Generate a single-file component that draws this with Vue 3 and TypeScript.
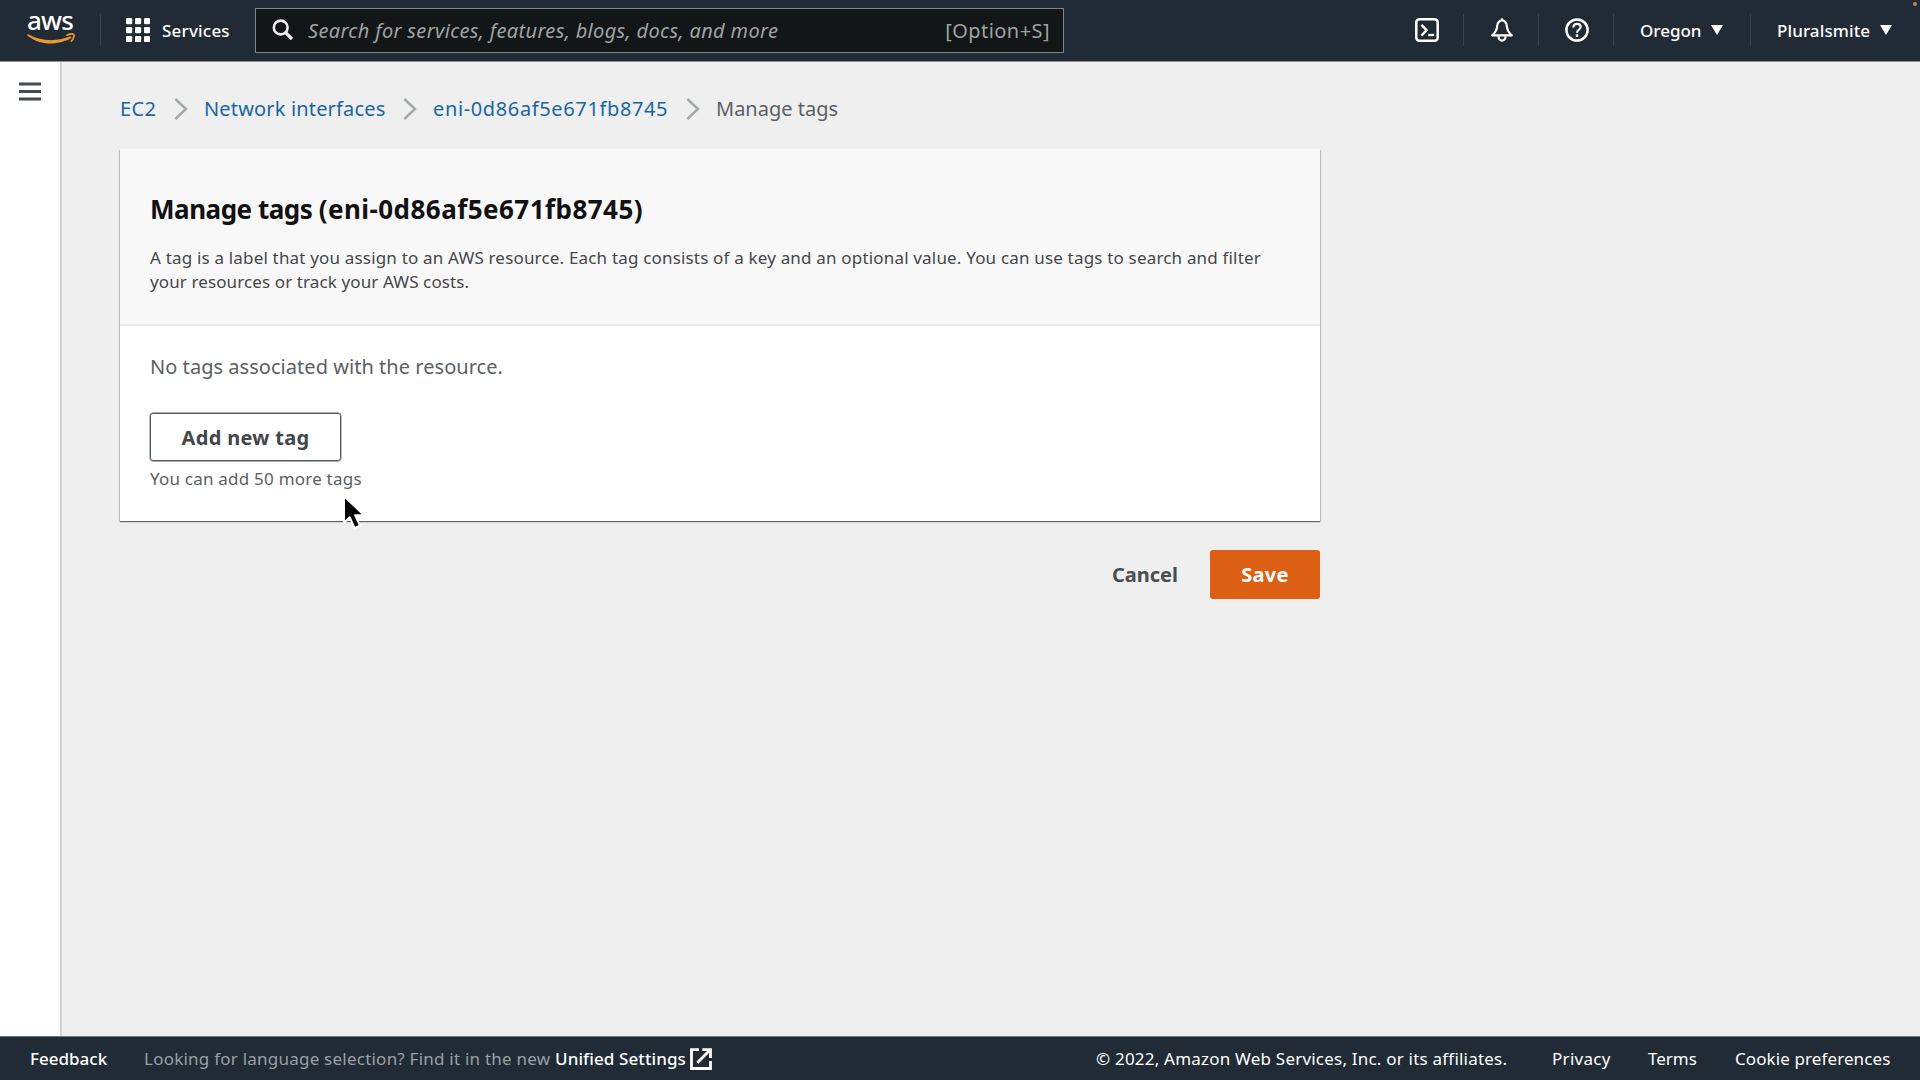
<script setup lang="ts">
interface Crumb {
  label: string
  width: number
  spacing: number
  current?: boolean
}

const resourceId = 'eni-0d86af5e671fb8745'

const crumbs: Crumb[] = [
  { label: 'EC2', width: 54, spacing: 0.4 },
  { label: 'Network interfaces', width: 199, spacing: 0.16 },
  { label: resourceId, width: 253, spacing: 0.63 },
  { label: 'Manage tags', width: 130, spacing: 0, current: true },
]
</script>

<template>
  <div class="page">
    <header class="topbar">
      <a class="logo">
        <span class="logo-text">aws</span>
        <svg class="smile" width="50" height="14" viewBox="0 0 50 14">
          <path d="M.6 1.4C-.1 2 .1 2.5.8 3.1 7.500 8.300 15.200 10.600 23.500 10.600 31.400 10.600 39.300 8.200 44 5.100c1.200-.9.200-2.200-1.200-1.500C28.500 9.100 13.800 8 1.700 1.500Z" fill="#f0962a" />
          <path d="M40 2.200c2.800-1.300 5.900-1.300 6.800-.6.800.8-.2 4.300-2.400 6.500" fill="none" stroke="#f0962a" stroke-width="1.700" stroke-linecap="round" />
        </svg>
      </a>
      <span class="rule"></span>
      <a class="services">
        <svg width="24" height="24" viewBox="0 0 24 24" fill="#fff">
          <template v-for="r in 3" :key="r">
            <rect v-for="c in 3" :key="c" :x="(c - 1) * 9" :y="(r - 1) * 9" width="6.200" height="6.200" rx="1.300" />
          </template>
        </svg>
        <span>Services</span>
      </a>
      <div class="search">
        <svg class="magnifier" width="22" height="22" viewBox="0 0 22 22" fill="none" stroke="#eef0f0">
          <circle cx="8.700" cy="8.500" r="6.900" stroke-width="2.600" />
          <path d="M13.600 13.600 20 20" stroke-width="3.200" />
        </svg>
        <span class="placeholder">Search for services, features, blogs, docs, and more</span>
        <span class="shortcut">[Option+S]</span>
      </div>
      <nav class="tools">
        <a class="tool">
          <svg width="24" height="24" viewBox="0 0 24 24" fill="none" stroke="#fff">
            <rect x="1.300" y="1.300" width="21.400" height="21.400" rx="3" stroke-width="2.500" />
            <path d="m6.400 6.800 5.300 5.400-5.300 5.400" stroke-width="2.400" />
            <path d="M13.200 17h6" stroke-width="2.300" />
          </svg>
        </a>
        <a class="tool">
          <svg width="24" height="24" viewBox="0 0 24 24" fill="none" stroke="#fff" stroke-width="2.200" stroke-linejoin="round">
            <path d="M12 2.300c-3.100.7-4.600 2.700-4.800 5.700-.2 4.400-1.400 6.300-5 9.300h19.600c-3.600-3-4.800-4.900-5-9.300-.2-3-1.700-5-4.800-5.700Z" />
            <path d="M12 .3v2.500" />
            <path d="M8.500 18.300v.8a3.500 3.500 0 0 0 7 0v-.8" />
          </svg>
        </a>
        <a class="tool">
          <svg width="24" height="24" viewBox="0 0 24 24" fill="none" stroke="#fff">
            <circle cx="12" cy="12" r="10.600" stroke-width="2.500" />
            <path d="M8.300 9.400c0-2.100 1.500-3.500 3.700-3.500s3.700 1.300 3.700 3.200c0 2.300-3.700 2.600-3.700 5.600" stroke-width="2.200" />
            <path d="M12 16.400v2.500" stroke-width="2.500" />
          </svg>
        </a>
        <a class="menu region">
          <span>Oregon</span>
          <svg width="12" height="10" viewBox="0 0 12 10"><path d="M0 0h12L6 10Z" fill="#fff" /></svg>
        </a>
        <a class="menu account">
          <span>Pluralsmite</span>
          <svg width="12" height="10" viewBox="0 0 12 10"><path d="M0 0h12L6 10Z" fill="#fff" /></svg>
        </a>
      </nav>
      <i class="indicator"></i>
    </header>

    <div class="body">
      <aside class="rail">
        <svg width="22" height="19" viewBox="0 0 22 19" fill="#454b50">
          <rect y="0.500" width="22" height="3" />
          <rect y="8" width="22" height="3" />
          <rect y="15.500" width="22" height="3" />
        </svg>
      </aside>

      <main class="content">
        <nav class="crumbs">
          <template v-for="(crumb, i) in crumbs" :key="crumb.label">
            <svg v-if="i > 0" class="chevron" width="14" height="22" viewBox="0 0 14 22">
              <path d="m1.300 1 10.700 10-10.700 10" fill="none" stroke="#a3a8a9" stroke-width="2.400" />
            </svg>
            <a
              :class="{ current: crumb.current }"
              :style="{ width: crumb.width + 'px', letterSpacing: crumb.spacing + 'px' }"
            >{{ crumb.label }}</a>
          </template>
        </nav>

        <section class="card">
          <div class="card-head">
            <h1><span class="title">Manage tags </span>({{ resourceId }})</h1>
            <p>
              <span class="line first">A tag is a label that you assign to an AWS resource. Each tag consists of a key and an optional value. You can use tags to search and filter</span>
              <span class="line second">your resources or track your AWS costs.</span>
            </p>
          </div>
          <div class="card-body">
            <p class="empty">No tags associated with the resource.</p>
            <button class="add">Add new tag</button>
            <p class="hint">You can add 50 more tags</p>
          </div>
          <svg class="cursor" width="24" height="36" viewBox="0 0 24 36">
            <path d="M2 2v26.500l5.700-5.300 4.900 11 5.400-2.500-4.900-10.500H22Z" fill="#000" stroke="#fff" stroke-width="2" stroke-linejoin="round" />
          </svg>
        </section>

        <div class="actions">
          <button class="cancel">Cancel</button>
          <button class="save">Save</button>
        </div>
      </main>
    </div>

    <footer class="footer">
      <a class="feedback">Feedback</a>
      <span class="language">Looking for language selection? Find it in the new</span>
      <a class="unified">Unified Settings</a>
      <svg width="22" height="22" viewBox="0 0 22 22" fill="none" stroke="#fff" stroke-width="2.800">
        <path d="M9 1.600H1.500v18.900h19V13" />
        <path d="M12.300 1.600h8.200V10" />
        <path d="M20 2 7.300 14.700" />
      </svg>
      <span class="copyright">© 2022, Amazon Web Services, Inc. or its affiliates.</span>
      <a class="privacy">Privacy</a>
      <a class="terms">Terms</a>
      <a class="cookies">Cookie preferences</a>
    </footer>
  </div>
</template>

<style>
body {
  margin: 0;
  overflow: hidden;
}
</style>

<style scoped>
.page {
  display: flex;
  flex-direction: column;
  width: 1920px;
  height: 1080px;
  overflow: hidden;
  background: #efefef;
  color: #545b64;
  font-family: "Noto Sans", "Open Sans", sans-serif;
  font-size: 20px;
  white-space: nowrap;
}

.page * {
  box-sizing: border-box;
}

svg {
  display: block;
  flex: none;
}

p,
h1 {
  margin: 0;
}

button {
  padding: 0;
  border: 0;
  background: none;
  font: inherit;
  font-weight: 700;
}

.topbar {
  position: relative;
  display: flex;
  flex: none;
  align-items: center;
  height: 62px;
  padding-bottom: 1px;
  border-bottom: 1px solid #8b9297;
  background: #202b35;
  color: #fff;
  font-size: 17px;
}

.logo {
  display: flex;
  flex-direction: column;
  width: 100px;
  height: 60px;
  padding: 8px 0 0 27px;
}

.logo-text {
  height: 25px;
  font-size: 26px;
  font-weight: 500;
  line-height: 25px;
  letter-spacing: -0.8px;
}

.smile {
  flex: none;
}

.rule {
  width: 1px;
  height: 32px;
  background: #3b454f;
}

.services {
  display: flex;
  align-items: center;
  gap: 12px;
  width: 154px;
  padding-left: 25px;
  font-weight: 500;
  letter-spacing: 0.2px;
}

.search {
  display: flex;
  align-items: center;
  width: 809px;
  height: 45px;
  padding: 0 13px 0 16px;
  border: 1px solid #7c868b;
  background: #121617;
  color: #9fa3a3;
  font-size: 20px;
}

.placeholder {
  margin-left: 14px;
  font-style: italic;
  letter-spacing: 0.34px;
}

.shortcut {
  margin-left: auto;
  letter-spacing: 0.45px;
}

.tools {
  display: flex;
  align-items: center;
  margin-left: auto;
}

.tool {
  display: flex;
  align-items: center;
  justify-content: center;
  width: 75px;
  height: 32px;
  padding-left: 2px;
  border-right: 1px solid #38424c;
}

.menu {
  display: flex;
  align-items: center;
  height: 32px;
  font-weight: 500;
}

.menu svg {
  margin-left: auto;
}

.region {
  width: 137px;
  padding: 0 27px 0 26px;
  border-right: 1px solid #38424c;
}

.account {
  width: 169px;
  padding: 0 28px 0 26px;
  letter-spacing: 0.1px;
}

.indicator {
  position: absolute;
  top: 2px;
  right: 3px;
  width: 4px;
  height: 4px;
  border-radius: 50%;
  background: #b98b5c;
}

.body {
  display: flex;
  flex: 1;
  min-height: 0;
}

.rail {
  flex: none;
  width: 62px;
  padding: 20px 0 0 19px;
  border-right: 2px solid #d3d5d5;
  background: #fff;
}

.content {
  width: 1258px;
  padding: 32px 0 0 58px;
}

.crumbs {
  display: flex;
  align-items: center;
  height: 30px;
  margin-left: -1px;
  line-height: 30px;
}

.crumbs a {
  flex: none;
  color: #1a66a5;
}

.crumbs a.current {
  color: #5b6063;
}

.chevron {
  margin-right: 16px;
}

.crumbs a:first-child {
  margin-left: 1px;
}

.card {
  position: relative;
  height: 372px;
  margin-top: 25px;
  background: #fff;
  box-shadow: 0 1px 1px rgba(0, 0, 0, 0.42), 1px 1px 1px rgba(0, 0, 0, 0.15), -1px 1px 1px rgba(0, 0, 0, 0.15);
}

.card-head {
  height: 177px;
  padding: 43px 30px 0;
  border-bottom: 2px solid #ebebeb;
  background: #f8f8f8;
}

h1 {
  color: #111;
  font-size: 26px;
  line-height: 34px;
  letter-spacing: 0.46px;
}

.title {
  letter-spacing: -0.48px;
}

.card-head p {
  display: flex;
  flex-direction: column;
  margin-top: 20px;
  color: #444749;
  font-size: 17px;
  line-height: 24px;
}

.first {
  letter-spacing: 0.18px;
}

.second {
  letter-spacing: 0.11px;
}

.card-body {
  display: flex;
  flex-direction: column;
  align-items: flex-start;
  padding: 26px 30px 0;
}

.empty {
  color: #5b6063;
  line-height: 30px;
  letter-spacing: 0.04px;
}

.add {
  width: 191px;
  height: 48px;
  margin-top: 31px;
  border: 1px solid #545b64;
  border-radius: 3px;
  box-shadow: 0 0 0 0.4px #545b64;
  color: #43474a;
  letter-spacing: 0.3px;
}

.hint {
  margin-top: 6px;
  color: #5b6063;
  font-size: 17px;
  line-height: 24px;
  letter-spacing: 0.22px;
}

.cursor {
  position: absolute;
  top: 345px;
  left: 222px;
}

.actions {
  display: flex;
  align-items: center;
  justify-content: flex-end;
  gap: 32px;
  margin-top: 29px;
}

.cancel {
  color: #4a4e50;
}

.save {
  width: 110px;
  height: 49px;
  border-radius: 3px;
  background: #dd5f13;
  color: #fff;
  letter-spacing: 0.3px;
}

.footer {
  display: flex;
  flex: none;
  align-items: center;
  height: 44px;
  padding: 0 0 0 30px;
  border-top: 1px solid #6d757b;
  background: #202b35;
  color: #fff;
  font-size: 17px;
}

.footer > * {
  flex: none;
}

.feedback {
  width: 114px;
  font-weight: 500;
}

.language {
  width: 411px;
  color: #98a0a5;
  letter-spacing: 0.23px;
}

.unified {
  width: 135px;
  font-weight: 500;
  letter-spacing: 0.1px;
}

.copyright {
  width: 456px;
  margin-left: 384px;
  letter-spacing: 0.21px;
}

.privacy {
  width: 96px;
  letter-spacing: 0.3px;
}

.terms {
  width: 87px;
}

.cookies {
  letter-spacing: 0.1px;
}
</style>
